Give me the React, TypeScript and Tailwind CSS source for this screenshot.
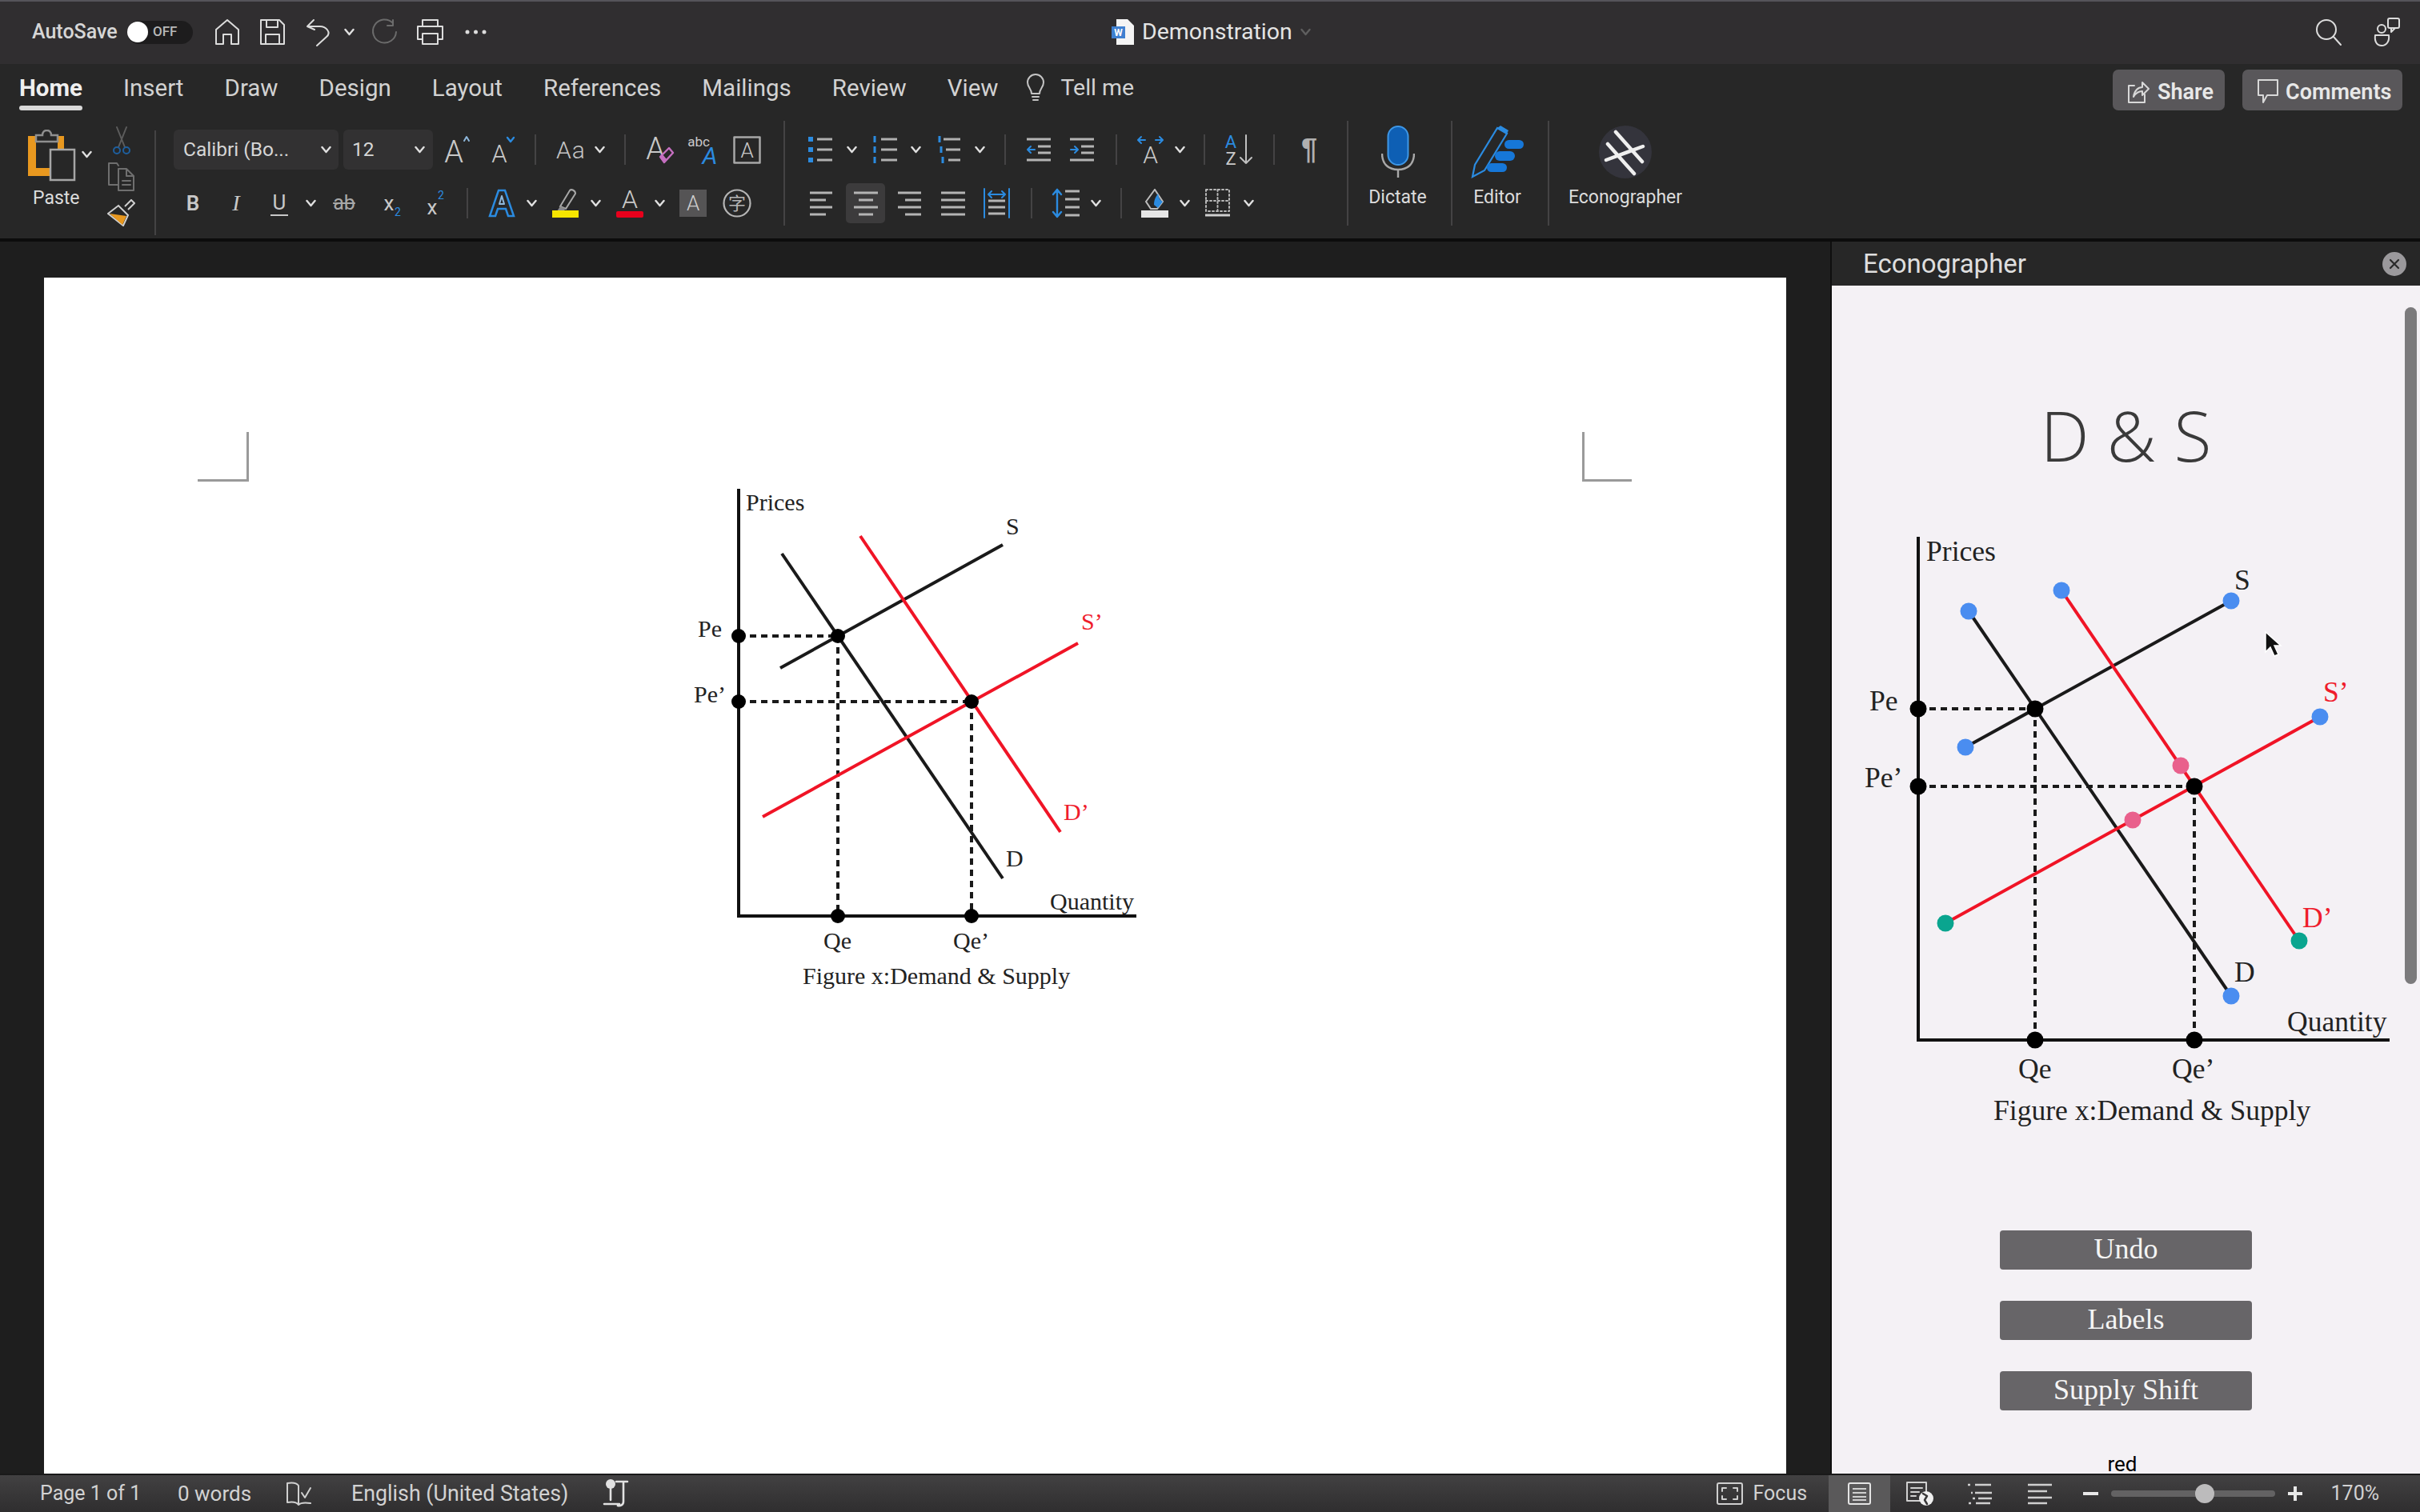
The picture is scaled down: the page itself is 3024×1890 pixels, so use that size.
import type { ReactNode } from "react";

const INK = "#c9c9c9";
const DIM = "#6f6f6f";
const BLUE = "#2b8be0";
const ORANGE = "#e8981f";

function Ic({ w, h, className = "", children }: { w: number; h: number; className?: string; children: ReactNode }) {
  return (
    <svg
      width={w}
      height={h}
      viewBox={`0 0 ${w} ${h}`}
      fill="none"
      stroke={INK}
      strokeWidth={2}
      strokeLinecap="round"
      strokeLinejoin="round"
      className={`shrink-0 overflow-visible ${className}`}
    >
      {children}
    </svg>
  );
}

function Ltr({ x, y, size, fill = INK, weight = 300, italic = false, children }: { x: number; y: number; size: number; fill?: string; weight?: number; italic?: boolean; children: ReactNode }) {
  return (
    <text x={x} y={y} fontSize={size} fill={fill} stroke="none" fontWeight={weight} fontStyle={italic ? "italic" : "normal"} textAnchor="middle">
      {children}
    </text>
  );
}

function Chev({ className = "", color = "#e0e0e0" }: { className?: string; color?: string }) {
  return (
    <svg width={13} height={10} viewBox="0 0 13 10" fill="none" stroke={color} strokeWidth={2.4} strokeLinecap="round" strokeLinejoin="round" className={`shrink-0 ${className}`}>
      <path d="M1.5 2 6.5 8 11.5 2" />
    </svg>
  );
}

function Div({ className = "" }: { className?: string }) {
  return <div className={`w-[2px] h-[38px] shrink-0 bg-[#444344] ${className}`} />;
}

function BigDiv() {
  return <div className="w-[2px] h-[131px] shrink-0 bg-[#444344] mt-[1px]" />;
}

function Rows({ w, rows, className = "" }: { w: number; rows: [number, number][]; className?: string }) {
  return (
    <Ic w={w} h={32} className={className}>
      {rows.map(([a, b], i) => (
        <line key={i} x1={a} x2={b} y1={3 + i * 9} y2={3 + i * 9} stroke="#b4b4b4" strokeWidth={3} strokeLinecap="butt" />
      ))}
    </Ic>
  );
}

function ListIcon({ w, kind, className = "" }: { w: number; kind: "bullet" | "number" | "multi"; className?: string }) {
  const ys = [6, 19, 32];
  return (
    <Ic w={w} h={38} className={className}>
      {ys.map((y, i) => (
        <g key={y}>
          <line x1={kind === "multi" ? 8 + i * 3 : 11} x2={w - 1} y1={y} y2={y} stroke="#b0b0b0" strokeWidth={3} strokeLinecap="butt" />
          {kind === "bullet" ? (
            <rect x={0} y={y - 3} width={6} height={6} fill={BLUE} stroke="none" />
          ) : (
            <rect x={1.5 + (kind === "multi" ? i * 2 : 0)} y={y - 4} width={3} height={8} fill={BLUE} stroke="none" />
          )}
        </g>
      ))}
    </Ic>
  );
}

function IndentIcon({ dir, className = "" }: { dir: "in" | "out"; className?: string }) {
  return (
    <Ic w={31} h={32} className={className}>
      <line x1={0} x2={30} y1={3} y2={3} stroke="#b4b4b4" strokeWidth={3} strokeLinecap="butt" />
      <line x1={14} x2={30} y1={12} y2={12} stroke="#b4b4b4" strokeWidth={3} strokeLinecap="butt" />
      <line x1={14} x2={30} y1={20} y2={20} stroke="#b4b4b4" strokeWidth={3} strokeLinecap="butt" />
      <line x1={0} x2={30} y1={29} y2={29} stroke="#b4b4b4" strokeWidth={3} strokeLinecap="butt" />
      {dir === "out" ? <path d="M10 16H2M5 12 1 16 5 20" stroke={BLUE} /> : <path d="M1 16H9M6 12 10 16 6 20" stroke={BLUE} />}
    </Ic>
  );
}

function TitleIcons() {
  return (
    <>
      <Ic w={32} h={32} className="ml-[27px]">
        <path d="M2 31V13L16 1 30 13V31H21V19H11V31Z" stroke="#dcdcdc" />
      </Ic>
      <Ic w={31} h={32} className="ml-[25px]">
        <path d="M1 1H24L30 7V31H1ZM8 1V10H22V1M7 31V19H24V31" stroke="#dcdcdc" />
      </Ic>
      <Ic w={30} h={36} className="ml-[27px]">
        <path d="M1 11 9 3M1 11 10 15M1 11H15C25 10 31 19 25 24L13 35" stroke="#dcdcdc" />
      </Ic>
      <Chev className="ml-[17px]" />
      <Ic w={32} h={32} className="ml-[22px]">
        <path d="M26 5A14.5 14.5 0 1 0 30 16M26 1V8H19" stroke="#6b6b6b" />
      </Ic>
      <Ic w={35} h={32} className="ml-[23px]">
        <path d="M8 9V1H27V9M8 25H2V9H33V25H27M8 18H27V31H8Z" stroke="#dcdcdc" />
      </Ic>
      <Ic w={29} h={8} className="ml-[25px]">
        <circle cx={4} cy={4} r={2.5} fill="#dcdcdc" stroke="none" />
        <circle cx={14.5} cy={4} r={2.5} fill="#dcdcdc" stroke="none" />
        <circle cx={25} cy={4} r={2.5} fill="#dcdcdc" stroke="none" />
      </Ic>
    </>
  );
}

function TitleBar() {
  return (
    <div className="h-[80px] shrink-0 bg-[#302e30] border-t-2 border-[#55545a] flex items-center relative pb-[2px]">
      <span className="ml-[40px] w-[119px] text-[25px] font-medium text-[#d6d6d6]">AutoSave</span>
      <div className="w-[82px] h-[29px] rounded-full bg-[#1d1c1d] flex items-center">
        <div className="w-[26px] h-[26px] rounded-full bg-white" />
        <span className="ml-[6px] text-[17px] font-medium text-[#b8b8b8]">OFF</span>
      </div>
      <TitleIcons />
      <div className="absolute left-[1389px] top-0 h-[76px] flex items-center">
        <svg width={28} height={32} viewBox="0 0 28 32" className="shrink-0">
          <path d="M6 0H20L28 8V32H6Z" fill="#f4f4f4" />
          <rect x={0} y={9} width={17} height={15} fill="#3f80d0" />
          <text x={8.5} y={21} fontSize={12} fontWeight={700} fill="#fff" textAnchor="middle">W</text>
        </svg>
        <span className="ml-[10px] text-[28.5px] text-[#e4e4e4]">Demonstration</span>
        <Chev className="ml-[8px] w-[17px]" color="#5f5f5f" />
      </div>
      <Ic w={32} h={32} className="ml-auto">
        <circle cx={13} cy={13} r={12} stroke="#dcdcdc" />
        <path d="M22 22 31 32" stroke="#dcdcdc" />
      </Ic>
      <Ic w={33} h={36} className="ml-[40px] mr-[25px]">
        <rect x={18} y={1} width={14} height={12} rx={2} stroke="#dcdcdc" />
        <path d="M22 13V18L27 13" stroke="#dcdcdc" />
        <circle cx={10} cy={14} r={5} stroke="#dcdcdc" />
        <path d="M2 22H19C20 30 16 35 10 35 4 35 1 30 2 22Z" stroke="#dcdcdc" />
      </Ic>
    </div>
  );
}

const TABS = ["Home", "Insert", "Draw", "Design", "Layout", "References", "Mailings", "Review", "View"];

function TabsRow() {
  return (
    <div className="h-[70px] shrink-0 flex items-start text-[29.5px] text-[#d2d2d2]">
      <div className="ml-[24px] pt-[10px] flex gap-[51px]">
        {TABS.map((t) => (
          <div key={t} className="flex flex-col">
            <span className={`leading-[40px] ${t === "Home" ? "font-bold text-[#efefef]" : "font-normal"}`}>{t}</span>
            {t === "Home" && <div className="h-[6px] mt-[2px] rounded-full bg-[#d9d9d9]" />}
          </div>
        ))}
      </div>
      <div className="ml-[36px] pt-[10px] flex items-center h-[50px]">
        <Ic w={22} h={34}>
          <path d="M6 24C6 18 1 16 1 10A10 10 0 0 1 21 10C21 16 16 18 16 24ZM7 28H15M8 32H14" stroke="#c4c4c4" />
        </Ic>
        <span className="ml-[20px] leading-[40px] text-[28.5px]">Tell me</span>
      </div>
      <div className="ml-auto mr-[22px] mt-[7px] flex gap-[22px] text-[27px] font-semibold text-[#e8e8e8]">
        <div className="w-[140px] h-[51px] rounded-[7px] bg-[#59575a] flex items-center pl-[18px] pt-[5px]">
          <Ic w={28} h={32} className="-mt-[3px]">
            <path d="M9 9H2V30H22V20M8 23C9 15 14 11 19 11V5L27 13 19 21V16C15 16 11 18 8 23Z" stroke="#d8d8d8" />
          </Ic>
          <span className="ml-[10px]">Share</span>
        </div>
        <div className="w-[200px] h-[51px] rounded-[7px] bg-[#59575a] flex items-center pl-[18px] pt-[5px]">
          <Ic w={28} h={32} className="-mt-[3px]">
            <path d="M2 2H26V21H13L8 30V21H2Z" stroke="#d8d8d8" />
          </Ic>
          <span className="ml-[8px]">Comments</span>
        </div>
      </div>
    </div>
  );
}

function PasteGroup() {
  return (
    <>
      <div className="ml-[35px] w-[67px] flex flex-col shrink-0">
        <svg width={60} height={66} viewBox="0 0 60 66" fill="none" className="shrink-0">
          <path d="M0 8H10V48H27V58H0Z" fill={ORANGE} />
          <path d="M37 8H45V24H37Z" fill={ORANGE} />
          <path d="M10 15V7H18C18 -1 29 -1 29 7H37V15Z" fill="#272727" stroke="#8f8f8f" strokeWidth={2.5} />
          <rect x={28} y={25} width={30} height={38} fill="#272727" stroke="#a6a6a6" strokeWidth={2.5} />
        </svg>
        <span className="mt-[6px] ml-[6px] leading-[28px] text-[23px] text-[#dcdcdc]">Paste</span>
      </div>
      <Chev className="mt-[26px]" />
      <div className="ml-[19px] -mt-[4px] flex flex-col items-start shrink-0">
        <Ic w={24} h={36} className="ml-[6px]">
          <path d="M6 1 16 26M18 1 8 26" stroke="#5c5c5c" />
          <circle cx={6} cy={30} r={4} stroke="#1e5f9e" />
          <circle cx={18} cy={30} r={4} stroke="#1e5f9e" />
        </Ic>
        <Ic w={35} h={36} className="mt-[9px]">
          <path d="M14 28H2V1H12L14 4M14 8H24L33 17V35H14ZM24 8V17H33M19 23H29M19 28H29" stroke={DIM} />
        </Ic>
        <svg width={35} height={34} viewBox="0 0 35 34" fill="none" className="mt-[10px] shrink-0">
          <path d="M22 9 30 1 34 5 26 13" stroke="#d0d0d0" strokeWidth={2} />
          <path d="M1 18 14 8 26 20 20 33Z" stroke="#d0d0d0" strokeWidth={2} />
          <path d="M3 18 24 21 19 32Z" fill={ORANGE} />
        </svg>
      </div>
      <div className="ml-[24px] w-[2px] h-[131px] bg-[#444344] shrink-0 mt-[1px]" />
    </>
  );
}

function FontGroup() {
  return (
    <div className="ml-[22px] flex flex-col shrink-0 w-[762px]">
      <div className="h-[50px] flex items-center">
        <div className="w-[206px] h-[50px] rounded-[6px] bg-[#323132] flex items-center pl-[12px] pr-[9px] justify-between text-[24.5px] text-[#d6d6d6]">
          <span>Calibri (Bo...</span>
          <Chev />
        </div>
        <div className="ml-[6px] w-[112px] h-[50px] rounded-[6px] bg-[#323132] flex items-center pl-[11px] pr-[10px] justify-between text-[24.5px] text-[#d6d6d6]">
          <span>12</span>
          <Chev />
        </div>
        <Ic w={32} h={36} className="ml-[15px]">
          <Ltr x={11} y={34} size={38}>A</Ltr>
          <path d="M24 7 27 2 30 7" stroke="#8fb8dc" />
        </Ic>
        <Ic w={29} h={36} className="ml-[26px]">
          <Ltr x={10} y={34} size={31}>A</Ltr>
          <path d="M20 3 24 8 28 3" stroke={BLUE} strokeWidth={2.4} />
        </Ic>
        <Div className="ml-[25px]" />
        <span className="ml-[25px] w-[36px] text-[30px] font-light tracking-[1px] text-[#c4c4c4]">Aa</span>
        <Chev className="ml-[12px]" />
        <Div className="ml-[24px]" />
        <Ic w={33} h={36} className="ml-[26px]">
          <Ltr x={11} y={30} size={38}>A</Ltr>
          <path d="M17 27 28 16 33 22 22 34Z" fill="#272727" stroke="#c56fc0" strokeWidth={2.4} />
          <path d="M17 27 22 34 25 30 20 24Z" fill="#c56fc0" stroke="none" />
        </Ic>
        <Ic w={36} h={38} className="ml-[20px]">
          <Ltr x={12} y={15} size={17} weight={400}>abc</Ltr>
          <Ltr x={26} y={37} size={30} fill={BLUE} italic weight={400}>A</Ltr>
        </Ic>
        <Ic w={35} h={35} className="ml-[19px]">
          <rect x={1.5} y={1.5} width={32} height={32} strokeWidth={2.5} stroke="#a8a8a8" />
          <Ltr x={17.5} y={27} size={26}>A</Ltr>
        </Ic>
      </div>
      <div className="mt-[17px] h-[50px] flex items-center">
        <span className="ml-[14px] w-[20px] text-[26px] font-semibold text-center text-[#c8c8c8]">B</span>
        <span className="ml-[36px] w-[16px] font-['Liberation_Serif',serif] italic text-[28px] text-center text-[#c8c8c8]">I</span>
        <span className="ml-[35px] w-[22px] text-[26px] text-center border-b-2 border-[#c8c8c8] leading-[30px] text-[#c8c8c8]">U</span>
        <Chev className="ml-[22px]" />
        <span className="ml-[18px] w-[34px] text-[25px] text-center line-through text-[#a8a8a8]">ab</span>
        <Ic w={23} h={36} className="ml-[31px]">
          <Ltr x={8} y={27} size={26} weight={400}>x</Ltr>
          <Ltr x={19} y={34} size={14} fill={BLUE} weight={400}>2</Ltr>
        </Ic>
        <Ic w={23} h={36} className="ml-[31px]">
          <Ltr x={8} y={32} size={26} weight={400}>x</Ltr>
          <Ltr x={19} y={13} size={14} fill={BLUE} weight={400}>2</Ltr>
        </Ic>
        <Div className="ml-[28px]" />
        <Ic w={34} h={36} className="ml-[25px]">
          <path d="M2 34 13 2H21L32 34H25L22 25H12L9 34Z" stroke={BLUE} strokeWidth={2.5} strokeLinejoin="miter" />
          <path d="M14 19 17 9 20 19Z" stroke="#8fb8dc" />
        </Ic>
        <Chev className="ml-[14px]" />
        <svg width={33} height={36} viewBox="0 0 33 36" fill="none" className="ml-[19px] shrink-0">
          <path d="M10 22 22 2C24 0 29 2 29 6L17 25Z" stroke="#a8a8a8" strokeWidth={2} />
          <path d="M10 22 17 25 14 28H6Z" fill="#8a8a8a" />
          <rect x={0} y={27} width={33} height={9} fill="#f6e500" />
        </svg>
        <Chev className="ml-[15px]" />
        <Ic w={36} h={36} className="ml-[18px]">
          <Ltr x={18} y={24} size={32}>A</Ltr>
          <rect x={1} y={28} width={34} height={8} rx={2} fill="#e8001c" stroke="none" />
        </Ic>
        <Chev className="ml-[13px]" />
        <div className="ml-[18px] w-[34px] h-[34px] bg-[#555455] flex items-center justify-center text-[26px] font-light text-[#cfcfcf]">A</div>
        <Ic w={36} h={36} className="ml-[20px]">
          <circle cx={18} cy={18} r={16.5} strokeWidth={2.2} stroke="#b5b5b5" />
          <text x={18} y={26} fontSize={22} fill="#b5b5b5" stroke="none" textAnchor="middle" fontFamily="'Noto Sans CJK SC',sans-serif">字</text>
        </Ic>
      </div>
    </div>
  );
}

function ParagraphGroup() {
  return (
    <div className="ml-[29px] flex flex-col shrink-0 w-[673px]">
      <div className="h-[50px] flex items-center">
        <ListIcon w={31} kind="bullet" />
        <Chev className="ml-[17px]" />
        <ListIcon w={32} kind="number" className="ml-[19px]" />
        <Chev className="ml-[16px]" />
        <ListIcon w={30} kind="multi" className="ml-[20px]" />
        <Chev className="ml-[17px]" />
        <Div className="ml-[24px]" />
        <IndentIcon dir="out" className="ml-[26px]" />
        <IndentIcon dir="in" className="ml-[23px]" />
        <Div className="ml-[26px]" />
        <Ic w={33} h={36} className="ml-[25px]">
          <path d="M10 6H2M5 2 1 6 5 10M23 6H31M28 2 32 6 28 10" stroke={BLUE} />
          <Ltr x={16.5} y={35} size={30}>A</Ltr>
        </Ic>
        <Chev className="ml-[14px]" />
        <Div className="ml-[23px]" />
        <Ic w={36} h={38} className="ml-[24px]">
          <Ltr x={8} y={17} size={22} fill={BLUE} weight={400}>A</Ltr>
          <Ltr x={8} y={38} size={22} weight={400}>Z</Ltr>
          <path d="M27 1V36M20 29 27 36 34 29" stroke="#c0c0c0" />
        </Ic>
        <Div className="ml-[25px]" />
        <span className="ml-[33px] w-[23px] text-[36px] leading-[36px] text-[#b0b0b0] font-['Liberation_Sans',sans-serif] font-bold">¶</span>
      </div>
      <div className="mt-[17px] h-[50px] flex items-center">
        <Rows w={29} className="ml-[2px]" rows={[[0, 28], [0, 20], [0, 28], [0, 20]]} />
        <div className="ml-[16px] w-[49px] h-[50px] rounded-[5px] bg-[#3c3b3c] flex items-center justify-center">
          <Rows w={30} rows={[[0, 30], [6, 24], [0, 30], [6, 24]]} />
        </div>
        <Rows w={29} className="ml-[16px]" rows={[[0, 29], [9, 29], [0, 29], [9, 29]]} />
        <Rows w={30} className="ml-[25px]" rows={[[0, 30], [0, 30], [0, 30], [0, 30]]} />
        <Ic w={33} h={36} className="ml-[23px]">
          <path d="M1 0V36M32 0V36M6 7H27M10 3 6 7 10 11M23 3 27 7 23 11" stroke={BLUE} />
          <line x1={6} x2={27} y1={15} y2={15} stroke="#b4b4b4" strokeWidth={3} strokeLinecap="butt" />
          <line x1={6} x2={27} y1={23} y2={23} stroke="#b4b4b4" strokeWidth={3} strokeLinecap="butt" />
          <line x1={6} x2={27} y1={31} y2={31} stroke="#b4b4b4" strokeWidth={3} strokeLinecap="butt" />
        </Ic>
        <Div className="ml-[26px]" />
        <Ic w={34} h={36} className="ml-[25px]">
          <path d="M6 1V35M1 7 6 1 11 7M1 29 6 35 11 29" stroke={BLUE} strokeWidth={2.4} />
          <line x1={16} x2={34} y1={3} y2={3} stroke="#b4b4b4" strokeWidth={3} strokeLinecap="butt" />
          <line x1={16} x2={34} y1={13} y2={13} stroke="#b4b4b4" strokeWidth={3} strokeLinecap="butt" />
          <line x1={16} x2={34} y1={23} y2={23} stroke="#b4b4b4" strokeWidth={3} strokeLinecap="butt" />
          <line x1={16} x2={34} y1={33} y2={33} stroke="#b4b4b4" strokeWidth={3} strokeLinecap="butt" />
        </Ic>
        <Chev className="ml-[14px]" />
        <Div className="ml-[24px]" />
        <svg width={34} height={36} viewBox="0 0 34 36" fill="none" className="ml-[24px] shrink-0">
          <path d="M6 16 17 1 27 16 20 25H12Z" stroke="#bdbdbd" strokeWidth={2} />
          <path d="M16 20C16 13 19 9 21 6 22 12 24 15 27 16L21 24Z" fill={BLUE} />
          <rect x={0} y={27} width={34} height={9} fill="#e6e6e6" />
        </svg>
        <Chev className="ml-[14px]" />
        <Ic w={31} h={36} className="ml-[19px]">
          <rect x={1} y={1} width={29} height={27} strokeDasharray="2 3" stroke="#b8b8b8" />
          <path d="M15.5 1V28M1 15H30" strokeDasharray="2 3" stroke="#b8b8b8" />
          <line x1={0} x2={31} y1={33} y2={33} stroke="#cfcfcf" strokeWidth={3} strokeLinecap="butt" />
        </Ic>
        <Chev className="ml-[17px]" />
      </div>
    </div>
  );
}

function BigButton({ label, className, children }: { label: string; className: string; children: ReactNode }) {
  return (
    <div className={`flex flex-col items-center shrink-0 ${className}`}>
      <div className="h-[73px] flex items-end justify-center w-full">{children}</div>
      <span className="mt-[10px] leading-[28px] text-[23px] text-[#dcdcdc]">{label}</span>
    </div>
  );
}

function Ribbon() {
  return (
    <div className="h-[152px] shrink-0 bg-[#272727] border-b-4 border-[#0c0c0c] flex items-start">
      <div className="flex items-start pt-[12px]">
        <PasteGroup />
      </div>
      <div className="pt-[12px]">
        <FontGroup />
      </div>
      <BigDiv />
      <div className="pt-[12px]">
        <ParagraphGroup />
      </div>
      <BigDiv />
      <BigButton label="Dictate" className="w-[128px] pr-[5px]">
        <svg width={42} height={66} viewBox="0 0 42 66" fill="none">
          <rect x={8.5} y={1} width={25} height={48} rx={12.5} fill="#0e5fb4" stroke="#3e97e6" strokeWidth={2} />
          <path d="M1 35C1 49 10 55 21 55 32 55 41 49 41 35M21 55V65" stroke="#a9a9a9" strokeWidth={2.4} />
        </svg>
      </BigButton>
      <BigDiv />
      <BigButton label="Editor" className="w-[119px] pr-[7px]">
        <svg width={66} height={66} viewBox="0 0 66 66" fill="none">
          <path d="M2 64 5 49 33 3 45 10 17 56Z" fill="#272727" stroke={BLUE} strokeWidth={2.2} />
          <path d="M33 3 37 0 47 6 45 10Z" fill={BLUE} />
          <rect x={42} y={18} width={24} height={11} rx={5.5} fill="#1677d8" />
          <rect x={30} y={32} width={25} height={12} rx={6} fill="#1677d8" />
          <rect x={20} y={47} width={25} height={11} rx={5.5} fill="#1677d8" />
        </svg>
      </BigButton>
      <BigDiv />
      <BigButton label="Econographer" className="w-[190px]">
        <svg width={66} height={66} viewBox="0 0 66 66" fill="none">
          <circle cx={33} cy={33} r={33} fill="#34343c" />
          <path d="M21 8 54 45M11 23 44 60M55 26 9 43" stroke="#efefef" strokeWidth={4.5} strokeLinecap="round" />
        </svg>
      </BigButton>
    </div>
  );
}

type Chart = {
  box: string;
  width: number;
  height: number;
  size: number;
  axisX: number;
  axisY: number;
  top: number;
  right: number;
  nodeR: number;
  black: number[][];
  red: number[][];
  dash: number[][];
  nodes: number[][];
  handles: { x: number; y: number; c: string }[];
  labels: { t: string; x: number; y: number; red?: boolean }[];
};

const DOC_CHART: Chart = {
  box: "850 602 600 650",
  width: 600,
  height: 650,
  size: 30,
  axisX: 923,
  axisY: 1145,
  top: 611,
  right: 1420,
  nodeR: 9,
  black: [[975, 835, 1253, 681], [977, 692, 1253, 1098]],
  red: [[1075, 670, 1325, 1040], [953, 1021, 1347, 804]],
  dash: [[923, 795, 1047, 795], [923, 877, 1214, 877], [1047, 795, 1047, 1145], [1214, 877, 1214, 1145]],
  nodes: [[923, 795], [1047, 795], [923, 877], [1214, 877], [1047, 1145], [1214, 1145]],
  handles: [],
  labels: [
    { t: "Prices", x: 932, y: 638 },
    { t: "S", x: 1257, y: 668 },
    { t: "S’", x: 1351, y: 787, red: true },
    { t: "Pe", x: 872, y: 796 },
    { t: "Pe’", x: 867, y: 878 },
    { t: "D’", x: 1329, y: 1025, red: true },
    { t: "D", x: 1257, y: 1083 },
    { t: "Quantity", x: 1312, y: 1137 },
    { t: "Qe", x: 1029, y: 1186 },
    { t: "Qe’", x: 1191, y: 1186 },
    { t: "Figure x:Demand & Supply", x: 1003, y: 1230 },
  ],
};

const PANEL_CHART: Chart = {
  box: "2289 660 735 760",
  width: 735,
  height: 760,
  size: 35.6,
  axisX: 2397,
  axisY: 1300,
  top: 671,
  right: 2986,
  nodeR: 10.5,
  black: [[2456, 934, 2788, 751], [2460, 764, 2788, 1245]],
  red: [[2576, 738, 2873, 1176], [2431, 1154, 2899, 896]],
  dash: [[2397, 886, 2543, 886], [2397, 983, 2742, 983], [2543, 886, 2543, 1300], [2742, 983, 2742, 1300]],
  nodes: [[2397, 886], [2543, 886], [2397, 983], [2742, 983], [2543, 1300], [2742, 1300]],
  handles: [
    { x: 2456, y: 934, c: "#4a8df0" },
    { x: 2788, y: 751, c: "#4a8df0" },
    { x: 2460, y: 764, c: "#4a8df0" },
    { x: 2788, y: 1245, c: "#4a8df0" },
    { x: 2576, y: 738, c: "#4a8df0" },
    { x: 2899, y: 896, c: "#4a8df0" },
    { x: 2873, y: 1176, c: "#0aa58f" },
    { x: 2431, y: 1154, c: "#0aa58f" },
    { x: 2725, y: 957, c: "#e9608c" },
    { x: 2665, y: 1025, c: "#e9608c" },
  ],
  labels: [
    { t: "Prices", x: 2407, y: 701 },
    { t: "S", x: 2792, y: 737 },
    { t: "S’", x: 2903, y: 877, red: true },
    { t: "Pe", x: 2336, y: 888 },
    { t: "Pe’", x: 2330, y: 984 },
    { t: "D’", x: 2877, y: 1159, red: true },
    { t: "D", x: 2792, y: 1227 },
    { t: "Quantity", x: 2858, y: 1289 },
    { t: "Qe", x: 2522, y: 1348 },
    { t: "Qe’", x: 2714, y: 1348 },
    { t: "Figure x:Demand & Supply", x: 2491, y: 1400 },
  ],
};

function ChartSvg({ c, className = "", children }: { c: Chart; className?: string; children?: ReactNode }) {
  return (
    <svg width={c.width} height={c.height} viewBox={c.box} className={`shrink-0 font-['Liberation_Serif',serif] ${className}`}>
      <path d={`M${c.axisX} ${c.top}V${c.axisY}H${c.right}`} fill="none" stroke="#111" strokeWidth={4} />
      {c.dash.map((d, i) => (
        <line key={i} x1={d[0]} y1={d[1]} x2={d[2]} y2={d[3]} stroke="#1a1a1a" strokeWidth={4} strokeDasharray="8 6" />
      ))}
      {c.black.map((d, i) => (
        <line key={i} x1={d[0]} y1={d[1]} x2={d[2]} y2={d[3]} stroke="#1a1a1a" strokeWidth={4} />
      ))}
      {c.red.map((d, i) => (
        <line key={i} x1={d[0]} y1={d[1]} x2={d[2]} y2={d[3]} stroke="#f01426" strokeWidth={4} />
      ))}
      {c.nodes.map((d, i) => (
        <circle key={i} cx={d[0]} cy={d[1]} r={c.nodeR} fill="#000" />
      ))}
      {c.handles.map((h, i) => (
        <circle key={i} cx={h.x} cy={h.y} r={10.5} fill={h.c} />
      ))}
      {c.labels.map((l) => (
        <text key={l.t} x={l.x} y={l.y} fontSize={c.size} fill={l.red ? "#ef1c2c" : "#222"}>
          {l.t}
        </text>
      ))}
      {children}
    </svg>
  );
}

function Document() {
  return (
    <div className="w-[2287px] shrink-0 bg-[#1e1e1e] pl-[55px] pt-[45px]">
      <div className="w-[2177px] h-full bg-white flex flex-col">
        <div className="flex justify-between pl-[192px] pr-[193px] pt-[193px]">
          <div className="w-[64px] h-[62px] border-r-[3px] border-b-[3px] border-[#9a9a9a]" />
          <div className="w-[62px] h-[62px] border-l-[3px] border-b-[3px] border-[#9a9a9a]" />
        </div>
        <ChartSvg c={DOC_CHART} className="ml-[795px]" />
      </div>
    </div>
  );
}

function Panel() {
  return (
    <div className="flex-1 flex flex-col border-l-2 border-[#0f0f0f] min-w-0">
      <div className="h-[55px] shrink-0 bg-[#272727] flex items-center pl-[39px] pr-[17px] justify-between">
        <span className="text-[33px] font-normal text-[#dedede]">Econographer</span>
        <div className="w-[30px] h-[30px] rounded-full bg-[#9b999c] flex items-center justify-center">
          <svg width={14} height={14} viewBox="0 0 14 14" fill="none" stroke="#2a2a2a" strokeWidth={2.2} strokeLinecap="round">
            <path d="M2 2 12 12M12 2 2 12" />
          </svg>
        </div>
      </div>
      <div className="flex-1 min-h-0 relative overflow-hidden bg-[#f4f1f5] flex flex-col items-center">
        <div className="absolute right-[4px] top-[27px] w-[15px] h-[846px] rounded-full bg-[#7b7a7c]" />
        <h1 className="shrink-0 mt-[137px] h-[104px] leading-[100px] text-[86px] font-['Open_Sans',sans-serif] font-light text-[#3a3a3a]">D &amp; S</h1>
        <ChartSvg c={PANEL_CHART} className="mt-[62px]">
          <path d="M2831 790V815L2837 809 2842 820 2847 818 2842 807H2850Z" fill="#111" stroke="#fff" strokeWidth={1.5} />
        </ChartSvg>
        <div className="shrink-0 mt-[118px] flex flex-col gap-[39px] font-['Liberation_Serif',serif] text-[36px] text-[#f5f5f5]">
          {["Undo", "Labels", "Supply Shift"].map((b) => (
            <div key={b} className="w-[315px] h-[49px] shrink-0 rounded-[4px] bg-[#676568] flex items-center justify-center pb-[3px]">
              {b}
            </div>
          ))}
        </div>
        <span className="shrink-0 mt-[55px] -ml-[9px] text-[26px] leading-[24px] text-black">red</span>
      </div>
    </div>
  );
}

function StatusBar() {
  return (
    <div className="h-[48px] shrink-0 bg-linear-to-b from-[#424142] to-[#2f2e2f] border-t-2 border-[#1a1a1a] flex items-center text-[25px] text-[#d2d2d2]">
      <span className="ml-[50px] w-[128px] whitespace-nowrap">Page 1 of 1</span>
      <span className="ml-[44px] w-[94px] text-[26px] whitespace-nowrap">0 words</span>
      <Ic w={33} h={32} className="ml-[41px]">
        <path d="M16 6C14 3 8 2 2 3V27C8 26 14 27 16 30V6ZM16 30C18 28 24 27 31 28M20 15 24 21 31 9" stroke="#d0d0d0" />
      </Ic>
      <span className="ml-[49px] w-[271px] text-[26.8px] whitespace-nowrap">English (United States)</span>
      <Ic w={31} h={36} className="ml-[44px]">
        <circle cx={9} cy={6} r={6} fill="#e2e2e2" stroke="none" />
        <path d="M9 12V26M1 31H20M16 3H30M25 3V28C25 32 21 34 18 33" stroke="#e2e2e2" strokeWidth={2.6} />
      </Ic>
      <Ic w={33} h={28} className="ml-auto">
        <rect x={1} y={1} width={31} height={26} rx={2} stroke="#cfcfcf" />
        <path d="M7 11V7H12M21 7H26V11M7 17V21H12M21 21H26V17" stroke="#cfcfcf" />
      </Ic>
      <span className="ml-[13px] w-[71px]">Focus</span>
      <div className="ml-[23px] w-[77px] self-stretch bg-[#5a595a] flex items-center justify-center">
        <Ic w={29} h={28}>
          <rect x={1} y={1} width={27} height={26} rx={2} stroke="#e4e4e4" />
          <path d="M6 8H23M6 13H23M6 18H23M6 22H23" stroke="#cfcfcf" strokeWidth={2} strokeLinecap="butt" />
        </Ic>
      </div>
      <Ic w={35} h={30} className="ml-[19px]">
        <path d="M18 24H2V1H26V13M7 8H21M7 13H17M7 18H13" stroke="#d0d0d0" />
        <circle cx={26} cy={21} r={9} fill="#f0f0f0" stroke="none" />
        <path d="M22 15 27 18 24 23 27 28" stroke="#3a393a" strokeWidth={2.5} />
      </Ic>
      <Ic w={31} h={28} className="ml-[43px]">
        <path d="M0 3H3M9 3H29M9 13H30M13 20H30M4 13H6M6 20H9M1 26H4M10 26H28" stroke="#cfcfcf" strokeWidth={2.4} strokeLinecap="butt" />
      </Ic>
      <Ic w={30} h={28} className="ml-[44px]">
        <path d="M0 3H30M0 11H24M0 19H30M0 26H24" stroke="#cfcfcf" strokeWidth={2.4} strokeLinecap="butt" />
      </Ic>
      <div className="ml-[39px] w-[19px] h-[4px] bg-[#e8e8e8]" />
      <div className="ml-[16px] w-[205px] h-[8px] rounded-full bg-[#636263] relative">
        <div className="absolute left-[105px] -top-[8px] w-[24px] h-[24px] rounded-full bg-[#bcbbbc]" />
      </div>
      <span className="ml-[16px] w-[18px] h-[18px] flex items-center justify-center relative">
        <div className="w-[18px] h-[4px] bg-[#e8e8e8]" />
        <div className="absolute w-[4px] h-[18px] bg-[#e8e8e8]" />
      </span>
      <span className="ml-[36px] mr-[51px]">170%</span>
    </div>
  );
}

export default function App() {
  return (
    <div className="w-[3024px] h-[1890px] flex flex-col overflow-hidden bg-[#1e1e1e] font-['Roboto',sans-serif]">
      <TitleBar />
      <div className="shrink-0 bg-[#272727]">
        <TabsRow />
      </div>
      <Ribbon />
      <div className="flex-1 min-h-0 flex">
        <Document />
        <Panel />
      </div>
      <StatusBar />
    </div>
  );
}
